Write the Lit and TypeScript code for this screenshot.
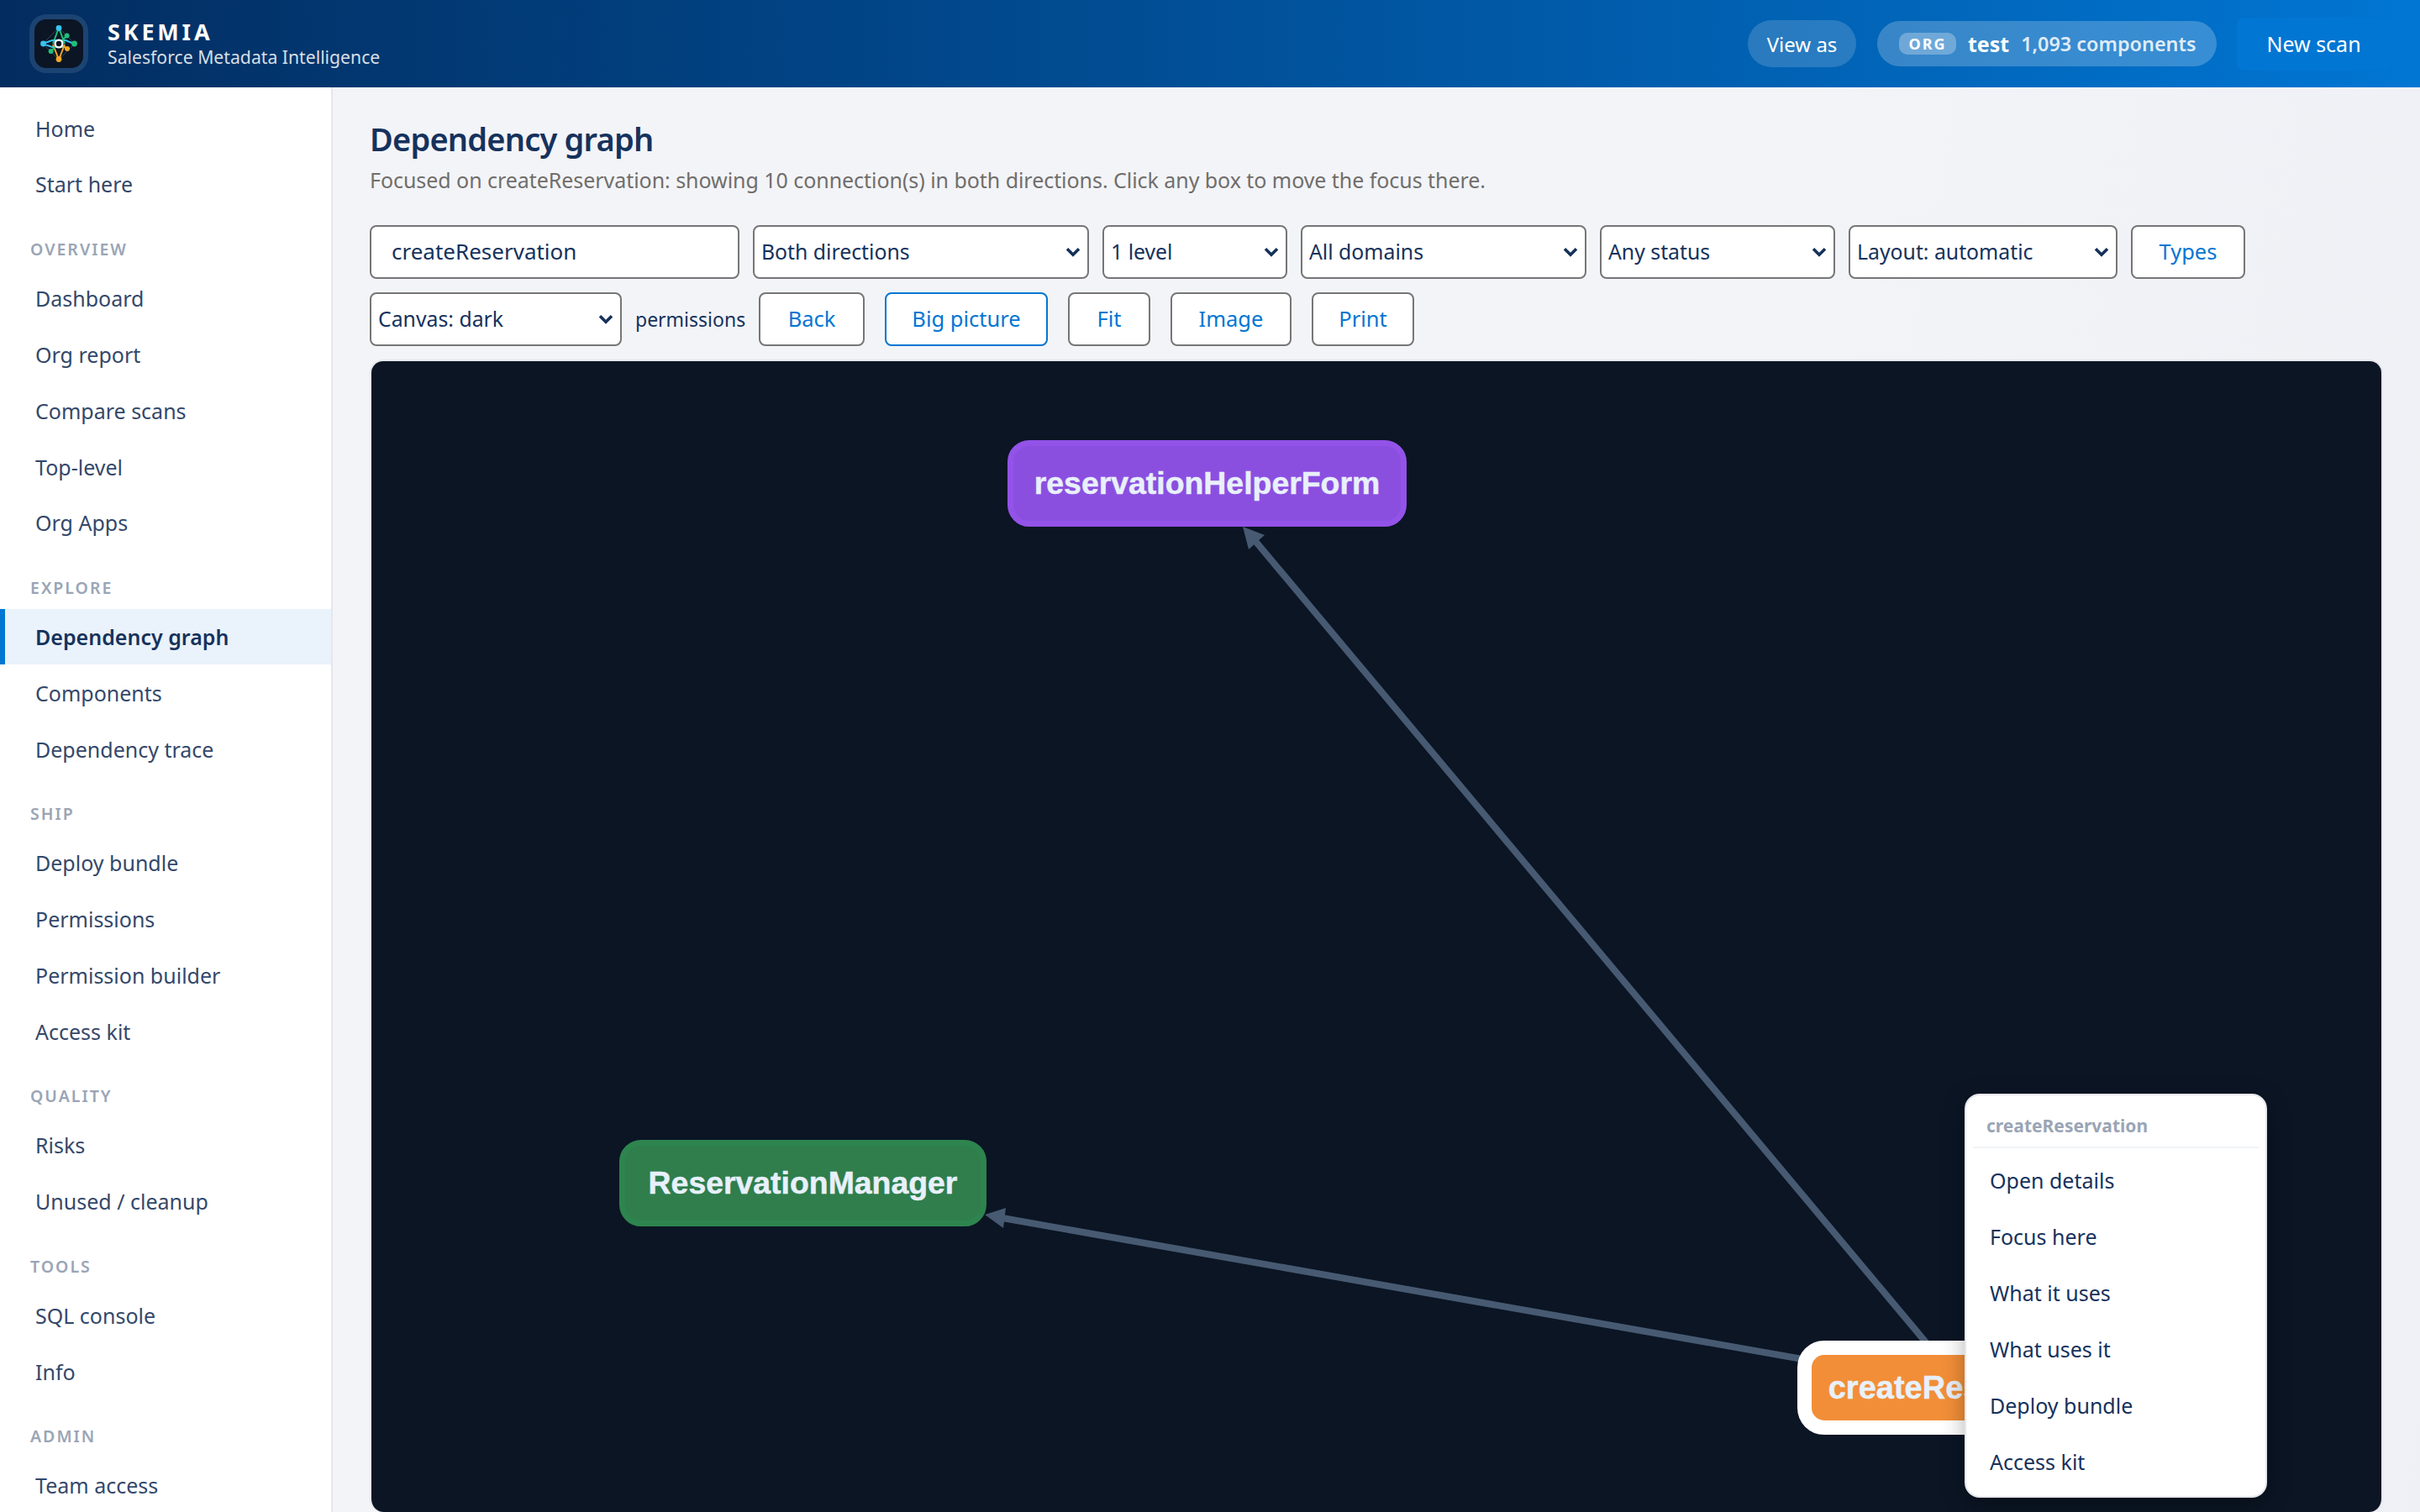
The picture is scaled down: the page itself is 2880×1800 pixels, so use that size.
import { LitElement, html, css, svg } from 'lit';
import { customElement } from 'lit/decorators.js';

const NAV = [
  { items: ['Home', 'Start here'] },
  { label: 'OVERVIEW', items: ['Dashboard', 'Org report', 'Compare scans', 'Top-level', 'Org Apps'] },
  { label: 'EXPLORE', items: ['Dependency graph', 'Components', 'Dependency trace'] },
  { label: 'SHIP', items: ['Deploy bundle', 'Permissions', 'Permission builder', 'Access kit'] },
  { label: 'QUALITY', items: ['Risks', 'Unused / cleanup'] },
  { label: 'TOOLS', items: ['SQL console', 'Info'] },
  { label: 'ADMIN', items: ['Team access'] },
];

const MENU = ['Open details', 'Focus here', 'What it uses', 'What uses it', 'Deploy bundle', 'Access kit'];

const NODES = [
  { name: 'reservationHelperForm', cls: 'purple', x: 757, y: 94, w: 475 },
  { name: 'ReservationManager', cls: 'green', x: 295, y: 927, w: 437 },
  { name: 'createReservation', cls: 'orange', x: 1697, y: 1166, w: 403 },
];

@customElement('app-root')
export class AppRoot extends LitElement {
  static styles = css`
    :host {
      display: flex;
      flex-direction: column;
      height: 100vh;
      overflow: hidden;
      font-family: 'Noto Sans', sans-serif;
      color: #16325c;
      background: #f3f4f8;
    }

    header {
      flex: none;
      height: 104px;
      display: flex;
      align-items: center;
      padding: 0 35px 0 41px;
      background: linear-gradient(90deg, #032d60 0%, #014486 35%, #0176d3 100%);
      color: #fff;
    }
    .logo {
      width: 58px;
      height: 58px;
      border-radius: 14px;
      background: #0b1524;
      box-shadow: 0 0 0 6px rgba(255, 255, 255, 0.1);
      margin-right: 29px;
    }
    .logo svg {
      display: block;
    }
    .brand {
      flex: 1;
    }
    .brand-name {
      font-size: 27px;
      line-height: 32px;
      font-weight: 700;
      letter-spacing: 3.8px;
    }
    .brand-sub {
      font-size: 21.2px;
      line-height: 28px;
      color: rgba(255, 255, 255, 0.85);
    }
    .view-as {
      height: 56px;
      width: 129px;
      border-radius: 28px;
      background: rgba(255, 255, 255, 0.16);
      display: flex;
      align-items: center;
      justify-content: center;
      font-size: 24px;
      margin-right: 25px;
    }
    .org {
      height: 54px;
      width: 404px;
      box-sizing: border-box;
      padding-left: 26px;
      border-radius: 27px;
      background: rgba(255, 255, 255, 0.22);
      display: flex;
      align-items: center;
      margin-right: 24px;
    }
    .org-tag {
      width: 68px;
      height: 26px;
      border-radius: 10px;
      background: rgba(255, 255, 255, 0.28);
      font-size: 18px;
      font-weight: 700;
      letter-spacing: 2px;
      display: flex;
      align-items: center;
      justify-content: center;
      margin-right: 14px;
    }
    .org-name {
      font-size: 25px;
      font-weight: 700;
      margin-right: 14px;
    }
    .org-count {
      font-size: 23.4px;
      font-weight: 600;
      color: rgba(255, 255, 255, 0.85);
    }
    .new-scan {
      width: 183px;
      height: 63px;
      border-radius: 8px;
      background: #0176d3;
      display: flex;
      align-items: center;
      justify-content: center;
      font-size: 25px;
    }

    .body {
      flex: 1;
      min-height: 0;
      display: flex;
    }

    nav {
      flex: none;
      width: 394px;
      background: #fff;
      border-right: 2px solid #e5e7eb;
      padding-top: 16px;
      overflow: hidden;
    }
    .section-label {
      height: 68.6px;
      box-sizing: border-box;
      padding: 31px 0 13px 36px;
      font-size: 19.5px;
      line-height: 24px;
      font-weight: 600;
      letter-spacing: 2px;
      color: #9aa5b5;
    }
    .item {
      height: 66px;
      box-sizing: border-box;
      margin-bottom: 0.9px;
      display: flex;
      align-items: center;
      padding: 0 0 1px 42px;
      font-size: 25px;
      color: #34486a;
    }
    .item.active {
      padding-left: 36px;
      border-left: 6px solid #0176d3;
      background: #eaf2fb;
      font-weight: 600;
      color: #16325c;
    }

    main {
      flex: 1;
      min-width: 0;
      display: flex;
      flex-direction: column;
      padding: 35px 44px 0;
      background: linear-gradient(100deg, #f3f4f8 60%, #eef0f5 100%);
    }
    h1 {
      margin: 0;
      font-size: 38px;
      line-height: 52px;
      font-weight: 600;
      letter-spacing: -0.8px;
      color: #16325c;
    }
    .sub {
      margin: 5px 0 36px;
      font-size: 25px;
      line-height: 36px;
      letter-spacing: -0.05px;
      color: #706e6b;
    }

    .filters {
      display: flex;
      align-items: center;
      gap: 16px;
      margin-bottom: 16px;
    }
    input,
    select,
    button {
      box-sizing: border-box;
      height: 64px;
      border: 2px solid #767676;
      border-radius: 8px;
      background-color: #fff;
      font-family: inherit;
    }
    input {
      width: 440px;
      padding: 0 24px 2px;
      font-size: 26px;
      color: #16325c;
    }
    button {
      padding: 0 0 2px;
      font-size: 25.5px;
      color: #0176d3;
    }
    button + button {
      margin-left: 8px;
    }
    button.on {
      border-color: #0176d3;
    }
    select {
      appearance: none;
      padding: 0 8px 2px;
      font-size: 24.8px;
      color: #16325c;
      background-image: url("data:image/svg+xml,%3Csvg xmlns='http://www.w3.org/2000/svg' width='18' height='12' viewBox='0 0 18 12'%3E%3Cpath d='M2 2.2l7 7 7-7' fill='none' stroke='%2316325c' stroke-width='3.6'/%3E%3C/svg%3E");
      background-repeat: no-repeat;
      background-position: right 8px center;
    }
    .w-dir {
      width: 400px;
    }
    .w-level {
      width: 220px;
    }
    .w-domain {
      width: 340px;
    }
    .w-status {
      width: 280px;
    }
    .w-layout {
      width: 320px;
    }
    .w-canvas {
      width: 300px;
    }
    .w-types {
      width: 136px;
    }
    .w-back {
      width: 126px;
    }
    .w-big {
      width: 194px;
    }
    .w-fit {
      width: 98px;
    }
    .w-image {
      width: 144px;
    }
    .w-print {
      width: 122px;
    }
    .perm {
      width: 131px;
      font-size: 23px;
      white-space: nowrap;
    }

    .canvas {
      flex: 1;
      min-height: 0;
      position: relative;
      overflow: hidden;
      background: #0b1524;
      border: 2px solid #e5e7eb;
      border-bottom: none;
      border-radius: 16px;
    }
    .edges {
      position: absolute;
      inset: 0;
      width: 100%;
      height: 100%;
    }
    .node {
      position: absolute;
      box-sizing: border-box;
      display: flex;
      align-items: center;
      justify-content: center;
      height: 103px;
      border: 7px solid;
      border-radius: 26px;
      font-family: 'Liberation Sans', Arial, sans-serif;
      font-size: 37.4px;
      font-weight: 700;
      white-space: nowrap;
      -webkit-text-stroke: 0.5px #e8f0fb;
      color: #e8f0fb;
    }
    .purple {
      background: #8b4fe0;
      border-color: #9353e8;
    }
    .green {
      background: #2f7e4c;
      border-color: #2e844e;
    }
    .orange {
      height: 112px;
      border: 17px solid #fff;
      border-radius: 32px;
      background: #f28e38;
      font-size: 38px;
    }

    .menu {
      position: absolute;
      left: 1896px;
      top: 872px;
      width: 360px;
      height: 481px;
      box-sizing: border-box;
      padding: 8px;
      background: #fff;
      border: 2px solid #e5e7eb;
      border-radius: 18px;
      box-shadow: 0 8px 28px rgba(0, 0, 0, 0.3);
    }
    .menu-head {
      padding: 13px 16px 10px;
      margin-bottom: 5px;
      border-bottom: 2px solid #f1f3f6;
      font-size: 21px;
      line-height: 30px;
      font-weight: 700;
      color: #9aa5b5;
    }
    .menu-item {
      height: 66.9px;
      display: flex;
      align-items: center;
      padding-left: 20px;
      font-size: 25px;
      color: #16325c;
    }
  `;

  renderLogo() {
    return html`<div class="logo">
      <svg width="58" height="58" viewBox="0 0 58 58" fill="none">
        <path d="M29 10 48 29 29 48 10 29Z" stroke="#33435c" stroke-width="1" />
        <path d="M29 10 22 29M29 10l7 19" stroke="#1fbf7a" stroke-width="2" />
        <path d="M10 29 21 25h16l10 4M10 29l11 4h16" stroke="#38c4f0" stroke-width="2" />
        <path d="M29 48 22 30M29 48l7-18" stroke="#f5a623" stroke-width="2" />
        <path d="M38.5 19.5 29 29 19.5 38" stroke="#1fbf7a" stroke-width="2" />
        <path d="M29 29 39 35" stroke="#f5a623" stroke-width="2" />
        <circle cx="29" cy="10.5" r="3.4" fill="#38c4f0" />
        <circle cx="10.5" cy="29" r="3.4" fill="#38c4f0" />
        <circle cx="47.5" cy="29" r="3.4" fill="#1fbf7a" />
        <circle cx="29" cy="47.5" r="3.4" fill="#f5a623" />
        <circle cx="38.6" cy="19.4" r="3" fill="#1fbf7a" />
        <circle cx="19.6" cy="38" r="3" fill="#1fbf7a" />
        <circle cx="39" cy="35" r="3" fill="#f5a623" />
        <circle cx="29" cy="29" r="4.4" fill="#0b1524" stroke="#fff" stroke-width="2.4" />
      </svg>
    </div>`;
  }

  renderEdges() {
    return svg`
      <line x1="1051" y1="213" x2="1860" y2="1180" stroke="#475a72" stroke-width="8" />
      <polygon points="1037,197 1063,207 1044,224" fill="#475a72" />
      <line x1="751" y1="1020" x2="1720" y2="1191" stroke="#475a72" stroke-width="8" />
      <polygon points="730,1016 755,1008 752,1032" fill="#475a72" />
    `;
  }

  render() {
    return html`
      <header>
        ${this.renderLogo()}
        <div class="brand">
          <div class="brand-name">SKEMIA</div>
          <div class="brand-sub">Salesforce Metadata Intelligence</div>
        </div>
        <div class="view-as">View as</div>
        <div class="org">
          <span class="org-tag">ORG</span>
          <span class="org-name">test</span>
          <span class="org-count">1,093 components</span>
        </div>
        <div class="new-scan">New scan</div>
      </header>
      <div class="body">
        <nav>
          ${NAV.map(
            (section) => html`
              ${section.label ? html`<div class="section-label">${section.label}</div>` : ''}
              ${section.items.map(
                (item) =>
                  html`<div class="item ${item === 'Dependency graph' ? 'active' : ''}">${item}</div>`
              )}
            `
          )}
        </nav>
        <main>
          <h1>Dependency graph</h1>
          <p class="sub">
            Focused on createReservation: showing 10 connection(s) in both directions. Click any box
            to move the focus there.
          </p>
          <div class="filters">
            <input value="createReservation" />
            <select class="w-dir"><option>Both directions</option></select>
            <select class="w-level"><option>1 level</option></select>
            <select class="w-domain"><option>All domains</option></select>
            <select class="w-status"><option>Any status</option></select>
            <select class="w-layout"><option>Layout: automatic</option></select>
            <button class="w-types">Types</button>
          </div>
          <div class="filters">
            <select class="w-canvas"><option>Canvas: dark</option></select>
            <span class="perm">permissions</span>
            <button class="w-back">Back</button>
            <button class="w-big on">Big picture</button>
            <button class="w-fit">Fit</button>
            <button class="w-image">Image</button>
            <button class="w-print">Print</button>
          </div>
          <div class="canvas">
            <svg class="edges">${this.renderEdges()}</svg>
            ${NODES.map(
              (n) =>
                html`<div class="node ${n.cls}" style="left:${n.x}px;top:${n.y}px;width:${n.w}px">
                  ${n.name}
                </div>`
            )}
            <div class="menu">
              <div class="menu-head">createReservation</div>
              ${MENU.map((m) => html`<div class="menu-item">${m}</div>`)}
            </div>
          </div>
        </main>
      </div>
    `;
  }
}
